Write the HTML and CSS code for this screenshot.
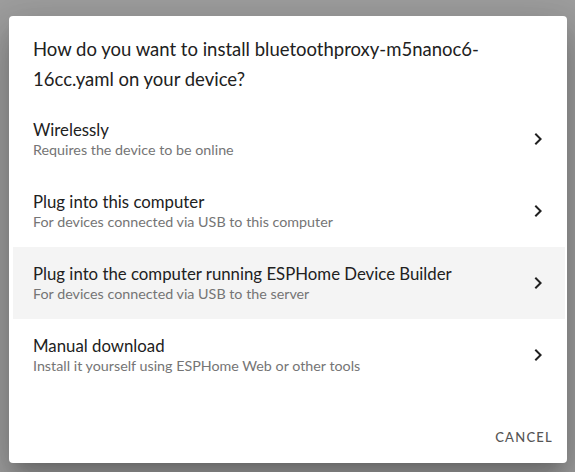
FILE: index.html
```html
<!DOCTYPE html>
<html>
<head>
<meta charset="utf-8">
<link rel="stylesheet" href="styles.css">
</head>
<body>
<div class="scrim">
  <div class="dialog">
    <h2 class="title">How do you want to install bluetoothproxy-m5nanoc6-16cc.yaml on your device?</h2>
    <div class="list">
      <div class="item">
        <div class="text"><div class="primary">Wirelessly</div><div class="secondary">Requires the device to be online</div></div>
        <svg class="chev" viewBox="0 0 24 24"><path d="M8.59,16.58L13.17,12L8.59,7.41L10,6L16,12L10,18L8.59,16.58Z"/></svg>
      </div>
      <div class="item">
        <div class="text"><div class="primary">Plug into this computer</div><div class="secondary">For devices connected via USB to this computer</div></div>
        <svg class="chev" viewBox="0 0 24 24"><path d="M8.59,16.58L13.17,12L8.59,7.41L10,6L16,12L10,18L8.59,16.58Z"/></svg>
      </div>
      <div class="item hover">
        <div class="text"><div class="primary">Plug into the computer running ESPHome Device Builder</div><div class="secondary">For devices connected via USB to the server</div></div>
        <svg class="chev" viewBox="0 0 24 24"><path d="M8.59,16.58L13.17,12L8.59,7.41L10,6L16,12L10,18L8.59,16.58Z"/></svg>
      </div>
      <div class="item">
        <div class="text"><div class="primary">Manual download</div><div class="secondary">Install it yourself using ESPHome Web or other tools</div></div>
        <svg class="chev" viewBox="0 0 24 24"><path d="M8.59,16.58L13.17,12L8.59,7.41L10,6L16,12L10,18L8.59,16.58Z"/></svg>
      </div>
    </div>
    <div class="actions"><button class="btn">Cancel</button></div>
  </div>
</div>
</body>
</html>
```
FILE: styles.css
```css
html, body {
  margin: 0;
  padding: 0;
  height: 100%;
}
body {
  background: #9e9e9e;
  font-family: Lato, "Noto Sans", sans-serif;
}
.scrim {
  display: flex;
  align-items: flex-start;
  justify-content: center;
  padding-top: 16px;
  padding-left: 1px;
}
.dialog {
  width: 558px;
  height: 447px;
  box-sizing: border-box;
  background: #fff;
  border-radius: 4px;
  box-shadow: 0 11px 15px -7px rgba(0,0,0,.2), 0 24px 38px 3px rgba(0,0,0,.14), 0 9px 46px 8px rgba(0,0,0,.12);
  display: flex;
  flex-direction: column;
}
.title {
  margin: 0;
  padding: 18px 24px 0 24px;
  font-size: 18.5px;
  line-height: 30px;
  font-weight: 400;
  color: #212121;
}
.list {
  margin-top: 9px;
  padding: 0 2px 0 4px;
}
.item {
  height: 72px;
  display: flex;
  align-items: center;
  padding: 0 15px 0 20px;
}
.item.hover {
  background: #f4f4f4;
}
.text {
  flex: 1;
}
.primary {
  font-size: 16.8px;
  line-height: 21px;
  color: #212121;
}
.secondary {
  font-size: 14.3px;
  line-height: 20px;
  color: #757575;
}
.chev {
  width: 24px;
  height: 24px;
  fill: #212121;
}
.actions {
  margin-top: auto;
  display: flex;
  justify-content: flex-end;
  padding: 8px 6px 8px 8px;
}
.btn {
  background: none;
  border: none;
  height: 36px;
  padding: 0 8px;
  font-family: inherit;
  font-size: 13px;
  font-weight: 500;
  letter-spacing: 1.25px;
  text-transform: uppercase;
  color: #555;
}
```
